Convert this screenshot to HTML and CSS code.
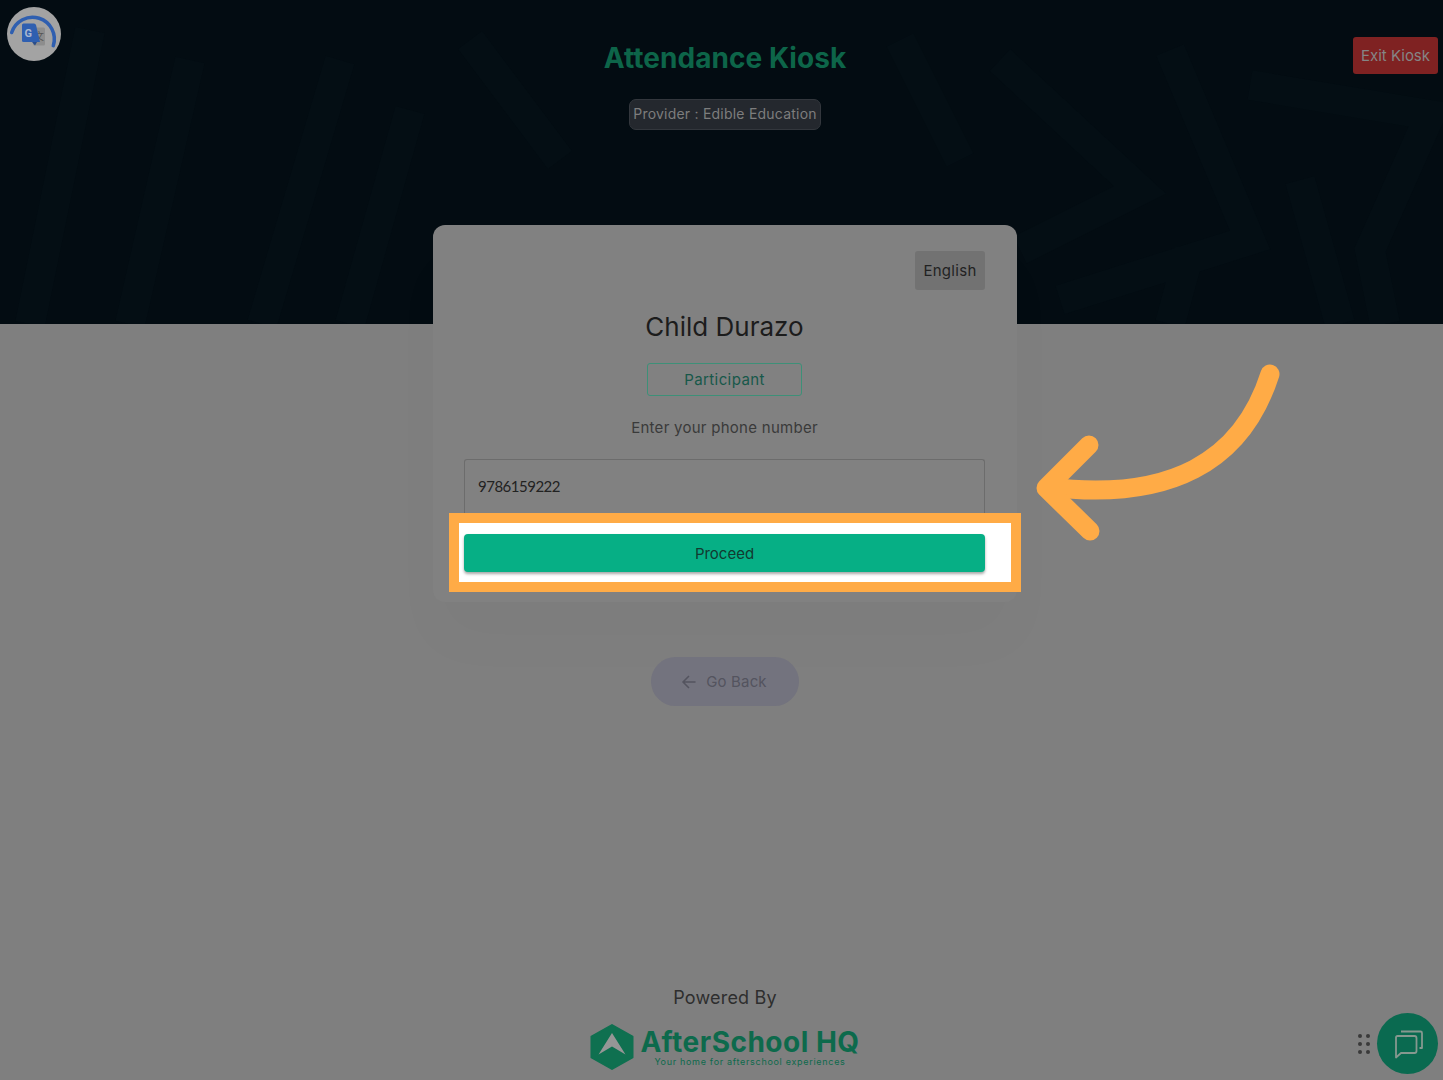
FILE: index.html
```html
<!DOCTYPE html>
<html lang="en">
<head>
  <meta charset="UTF-8" />
  <meta name="viewport" content="width=device-width, initial-scale=1.0" />
  <title>Attendance Kiosk | AfterSchool HQ</title>
  <link rel="stylesheet" href="styles.css">
</head>
<body>
  <header class="hero">
    <svg class="hero-pattern" viewBox="0 0 1443 324" preserveAspectRatio="none" aria-hidden="true">
      <g fill="none" stroke="#040e14" stroke-width="30">
        <path d="M90 30 L30 324 M190 60 L130 324 M340 60 L262 324 M410 110 L350 324"/>
        <path d="M1000 60 L1140 190 L1020 250 M1170 50 L1250 240 L1060 300 M1250 85 L1430 115 L1370 250 L1385 324 M1300 180 L1340 324 M1190 250 L1170 324"/>
        <path d="M470 40 L560 160 M900 40 L960 160"/>
      </g>
    </svg>
    <button class="translate-btn" type="button" aria-label="Translate">
      <svg viewBox="0 0 54 54" width="54" height="54">
        <circle cx="27" cy="27" r="27" fill="#a3a3a3"/>
        <path d="M4.700 25.500 A21.500 21.500 0 1 1 46.300 38.700" fill="none" stroke="#2f5fb0" stroke-width="3.500" stroke-linecap="round"/>
        <rect x="26" y="20.500" width="12" height="18" rx="1.500" fill="#8d8d8d"/>
        <text class="translate-zh" x="27" y="33">文</text>
        <path d="M16.500 16.500 H27 Q28.500 16.500 29 18 L33 35 H16.500 Q15 35 15 33.500 V18 Q15 16.500 16.500 16.500 Z" fill="#2f5fb0"/>
        <path d="M25 35 H30 L28 38.500 Z" fill="#2a4d8a"/>
        <text class="translate-g" x="17.500" y="29.500">G</text>
      </svg>
    </button>
    <a class="exit-btn" href="#">Exit Kiosk</a>
    <h1 class="hero-title">Attendance Kiosk</h1>
    <span class="provider-tag">Provider : Edible Education</span>
  </header>

  <main class="content">
    <section class="card">
      <div class="card-top">
        <span class="lang-btn">English</span>
      </div>
      <h2 class="child-name">Child Durazo</h2>
      <span class="role-tag">Participant</span>
      <p class="prompt">Enter your phone number</p>
      <div class="phone-field">9786159222</div>
      <div class="highlight">
        <button class="proceed-btn" type="button">Proceed</button>
      </div>
    </section>

    <a class="back-btn" href="#">
      <svg viewBox="0 0 16 16" width="16" height="16" aria-hidden="true">
        <path d="M14.500 8 H2 M8 2 L2 8 L8 14" fill="none" stroke="#54545f" stroke-width="1.500"/>
      </svg>
      Go Back
    </a>
  </main>

  <footer class="powered">
    <p class="powered-label">Powered By</p>
    <div class="brand">
      <svg viewBox="0 0 44 46" width="44" height="46" aria-hidden="true">
        <path d="M22 1 L42.500 12.500 V33.500 L22 45 L1.500 33.500 V12.500 Z" fill="#0f7050" stroke="#0f7050" stroke-width="2" stroke-linejoin="round"/>
        <path d="M22 9 L35.500 30.500 L22 22.500 L8.500 30.500 Z" fill="#969696"/>
      </svg>
      <div class="brand-text">
        <span class="brand-name">AfterSchool HQ</span>
        <span class="brand-sub">Your home for afterschool experiences</span>
      </div>
    </div>
  </footer>

  <div class="chat-widget">
    <span class="chat-grip"><i></i><i></i><i></i><i></i><i></i><i></i></span>
    <button class="chat-btn" type="button" aria-label="Chat">
      <svg viewBox="0 0 30 30" width="30" height="30" aria-hidden="true">
        <path d="M4.500 7 H21.500 Q23.500 7 23.500 9 V22 Q23.500 24 21.500 24 H8 L3 28.500 V8.500 Q3 7 4.500 7 Z" fill="none" stroke="#86988f" stroke-width="1.800" stroke-linejoin="round"/>
        <path d="M8 2.500 H27.500 Q29 2.500 29 4 V19 H26.500" fill="none" stroke="#86988f" stroke-width="1.800" stroke-linejoin="round"/>
      </svg>
    </button>
  </div>

  <svg class="callout-arrow" viewBox="0 0 280 200" width="280" height="200" aria-hidden="true">
    <path d="M250 24 C222 112 150 152 28 137" fill="none" stroke="#ffab46" stroke-width="19" stroke-linecap="round"/>
    <path d="M69 95 L26 138 L70 181" fill="none" stroke="#ffab46" stroke-width="19" stroke-linecap="round" stroke-linejoin="round"/>
  </svg>
</body>
</html>
```

FILE: styles.css
```css
body {
  font-family: 'Inter', sans-serif;
  background: #7f7f7f;
  color: #222;
  margin: 0;
  min-height: 1080px;
  position: relative;
  overflow: hidden;
}
.hero {
  height: 324px;
  background: #030c12;
  position: relative;
  display: flex;
  flex-direction: column;
  align-items: center;
  box-sizing: border-box;
  padding: 41px 0 0 7px;
}
.hero-pattern {
  position: absolute;
  top: 0;
  left: 0;
  width: 100%;
  height: 100%;
}
.translate-btn {
  position: absolute;
  top: 7px;
  left: 7px;
  width: 54px;
  height: 54px;
  padding: 0;
  border: none;
  background: none;
}
.translate-g {
  font-family: 'Roboto', sans-serif;
  font-size: 11px;
  font-weight: 700;
  fill: #a9b7d0;
}
.translate-zh {
  font-family: 'Noto Sans CJK SC', sans-serif;
  font-size: 10px;
  fill: #555;
}
.exit-btn {
  position: absolute;
  top: 37px;
  right: 5px;
  width: 85px;
  height: 37px;
  line-height: 37px;
  text-align: center;
  background: #7f2222;
  border-radius: 3px;
  color: #858585;
  font-size: 15px;
  text-decoration: none;
}
.hero-title {
  position: relative;
  font-size: 28px;
  font-weight: 700;
  line-height: 34px;
  letter-spacing: 0.05px;
  color: #0d6549;
  margin: 0 0 24px;
}
.provider-tag {
  position: relative;
  font-size: 14px;
  line-height: 28px;
  padding: 0 3px 1px;
  color: #7d7d7d;
  background: #24282e;
  border: 1px solid #33373d;
  border-radius: 7px;
  letter-spacing: 0.22px;
}
.content {
  display: flex;
  flex-direction: column;
  align-items: center;
  margin-top: -99px;
  padding-left: 7px;
  position: relative;
}
.card {
  width: 584px;
  box-sizing: border-box;
  padding: 26px 32px 10px 31px;
  background: #818181;
  border-radius: 12px;
  display: flex;
  flex-direction: column;
  align-items: center;
  box-shadow: 0 40px 60px rgba(0,0,0,0.02);
}
.card-top {
  width: 100%;
  display: flex;
  justify-content: flex-end;
}
.lang-btn {
  width: 70px;
  height: 39px;
  line-height: 39px;
  text-align: center;
  background: #727272;
  border-radius: 3px;
  font-size: 15px;
  letter-spacing: 0.3px;
  color: #222;
}
.child-name {
  font-size: 26px;
  font-weight: 400;
  line-height: 32px;
  margin: 21px 0 20px;
  color: #1c1c1c;
}
.role-tag {
  width: 155px;
  height: 33px;
  line-height: 31px;
  box-sizing: border-box;
  text-align: center;
  border: 1px solid #3d9078;
  border-radius: 3px;
  font-size: 15px;
  letter-spacing: 0.4px;
  color: #17584a;
}
.prompt {
  margin: 23px 0 22px;
  font-size: 15px;
  line-height: 18px;
  letter-spacing: 0.27px;
  color: #3a3a3a;
}
.phone-field {
  width: 100%;
  height: 54px;
  line-height: 52px;
  box-sizing: border-box;
  padding-left: 13px;
  border: 1px solid #6c6c6c;
  border-bottom: none;
  border-radius: 3px 3px 0 0;
  font-family: 'Lato', sans-serif;
  font-size: 15px;
  letter-spacing: -0.5px;
  color: #222;
}
.highlight {
  align-self: stretch;
  margin: 0 -36px 0 -15px;
  padding: 11px 26px 10px 5px;
  border: 10px solid #ffab46;
  background: #fff;
  position: relative;
}
.proceed-btn {
  display: block;
  width: 100%;
  height: 38px;
  border: none;
  border-radius: 4px;
  background: #06af85;
  box-shadow: 0 2px 3px rgba(0,0,0,0.35);
  font-family: 'Inter', sans-serif;
  font-size: 15px;
  color: #123a30;
}
.back-btn {
  margin-top: 55px;
  width: 148px;
  height: 49px;
  box-sizing: border-box;
  padding-right: 2px;
  border-radius: 25px;
  background: #73737e;
  display: flex;
  align-items: center;
  justify-content: center;
  gap: 9px;
  font-size: 15px;
  letter-spacing: 0.15px;
  color: #54545f;
  text-decoration: none;
}
.powered {
  position: absolute;
  left: 7px;
  right: 0;
  bottom: 10px;
  display: flex;
  flex-direction: column;
  align-items: center;
}
.powered-label {
  margin: 0 0 15px;
  font-size: 18px;
  line-height: 22px;
  letter-spacing: 0.2px;
  color: #2e2e2e;
}
.brand {
  display: flex;
  align-items: center;
  gap: 6px;
}
.brand-text {
  display: flex;
  flex-direction: column;
  align-items: center;
}
.brand-name {
  font-size: 28px;
  font-weight: 700;
  line-height: 28px;
  letter-spacing: 0.5px;
  color: #0d6a4c;
}
.brand-sub {
  font-size: 9px;
  line-height: 11px;
  letter-spacing: 0.7px;
  color: #0d6a4c;
}
.chat-widget {
  position: absolute;
  right: 5px;
  bottom: 6px;
  display: flex;
  align-items: center;
  gap: 7px;
}
.chat-grip {
  display: grid;
  grid-template-columns: 4px 4px;
  gap: 4px;
}
.chat-grip i {
  width: 4px;
  height: 4px;
  border-radius: 50%;
  background: #3a3a3a;
}
.chat-btn {
  width: 61px;
  height: 61px;
  padding: 0;
  border: none;
  border-radius: 50%;
  background: #0a6a50;
  display: flex;
  align-items: center;
  justify-content: center;
}
.callout-arrow {
  position: absolute;
  left: 1020px;
  top: 350px;
}
```
